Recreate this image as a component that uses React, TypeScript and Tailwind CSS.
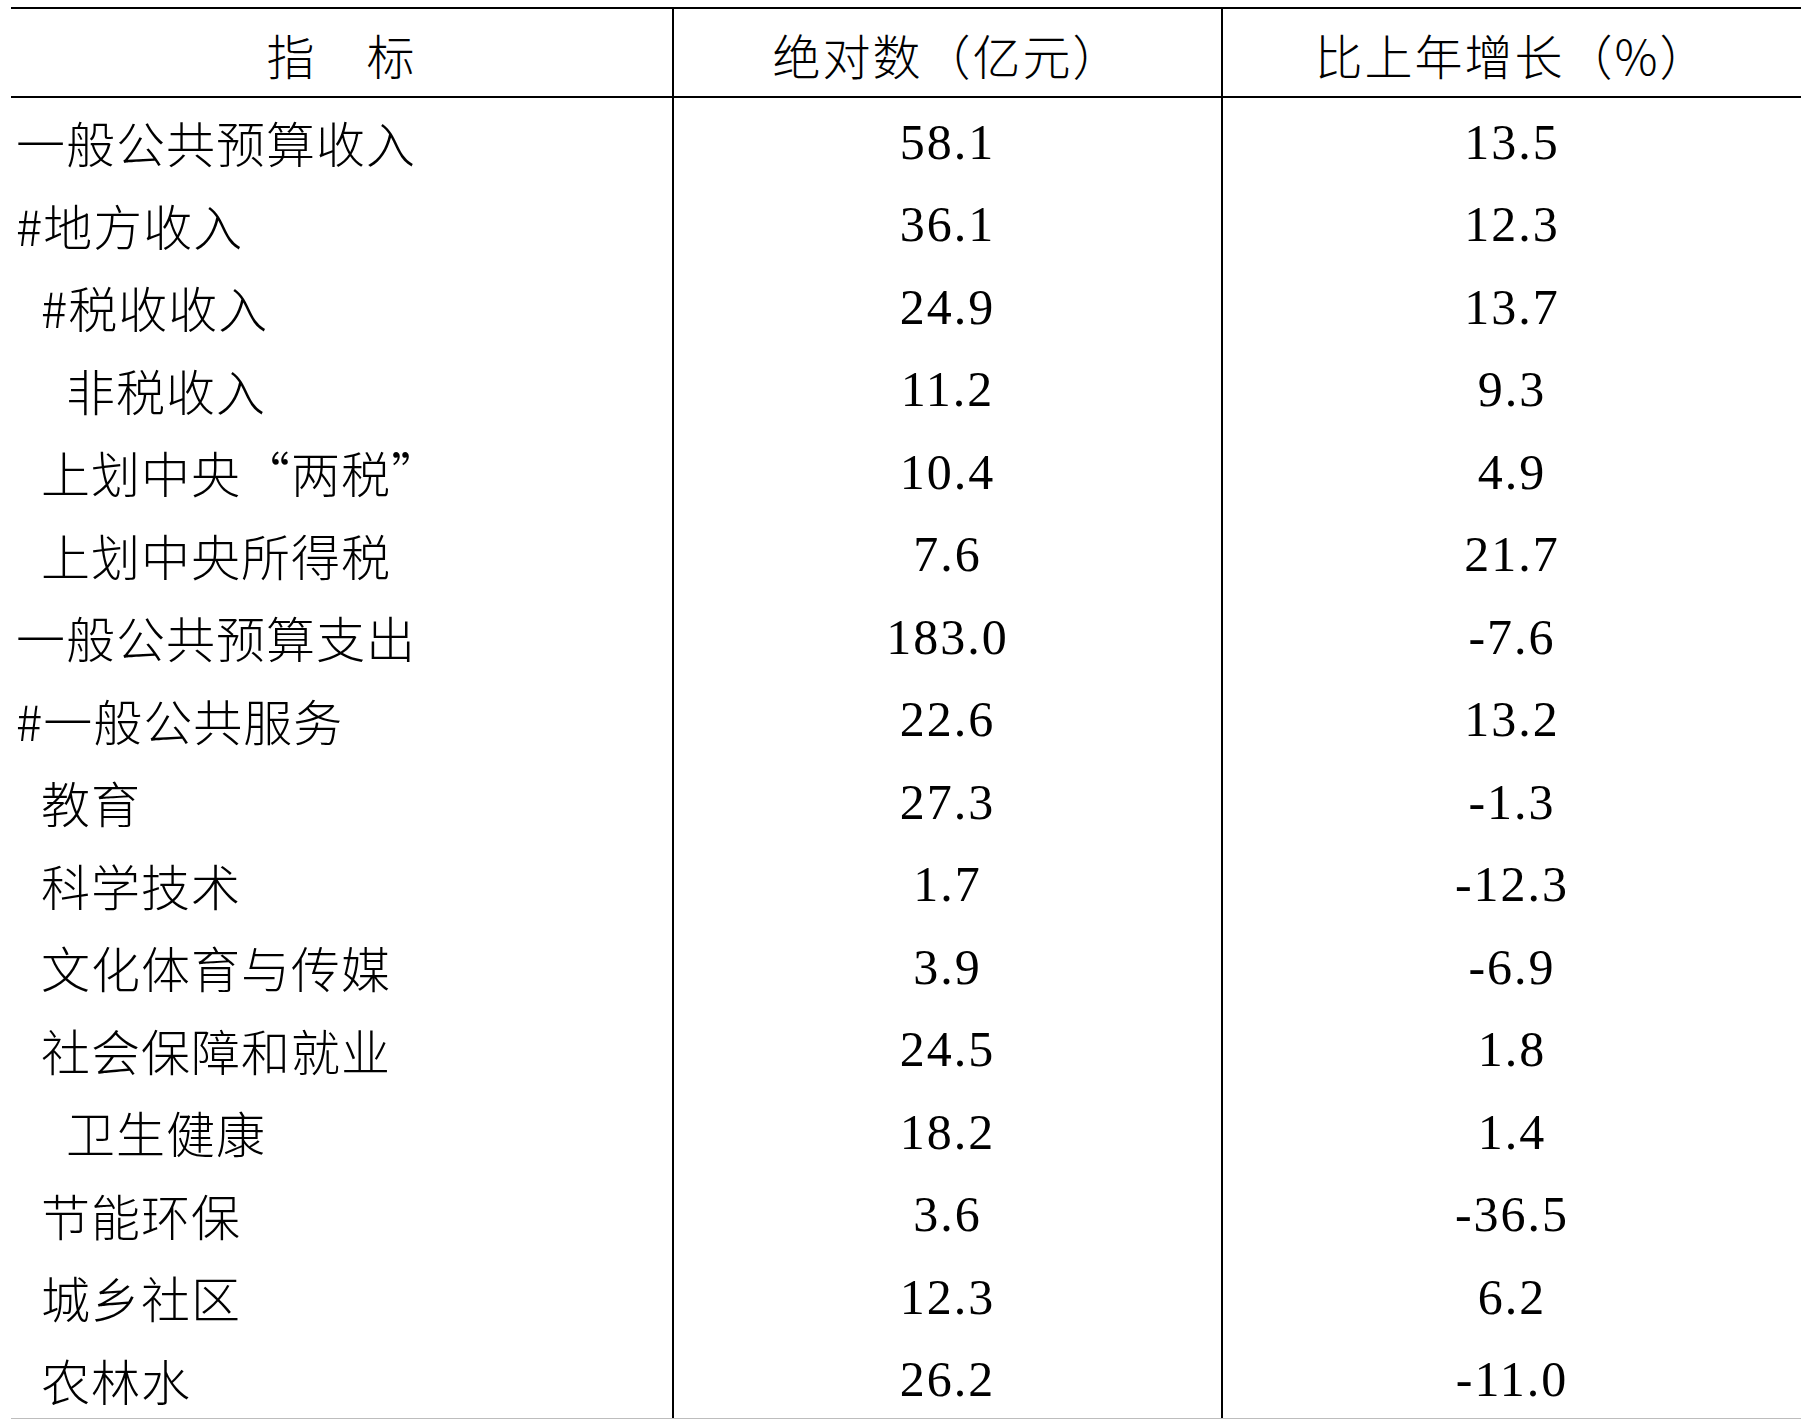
const rows: { name: string; indent: number; abs: string; growth: string }[] = [
  { name: '一般公共预算收入', indent: 0, abs: '58.1', growth: '13.5' },
  { name: '#地方收入', indent: 0, abs: '36.1', growth: '12.3' },
  { name: '#税收收入', indent: 1, abs: '24.9', growth: '13.7' },
  { name: '非税收入', indent: 2, abs: '11.2', growth: '9.3' },
  { name: '上划中央“两税”', indent: 1, abs: '10.4', growth: '4.9' },
  { name: '上划中央所得税', indent: 1, abs: '7.6', growth: '21.7' },
  { name: '一般公共预算支出', indent: 0, abs: '183.0', growth: '-7.6' },
  { name: '#一般公共服务', indent: 0, abs: '22.6', growth: '13.2' },
  { name: '教育', indent: 1, abs: '27.3', growth: '-1.3' },
  { name: '科学技术', indent: 1, abs: '1.7', growth: '-12.3' },
  { name: '文化体育与传媒', indent: 1, abs: '3.9', growth: '-6.9' },
  { name: '社会保障和就业', indent: 1, abs: '24.5', growth: '1.8' },
  { name: '卫生健康', indent: 2, abs: '18.2', growth: '1.4' },
  { name: '节能环保', indent: 1, abs: '3.6', growth: '-36.5' },
  { name: '城乡社区', indent: 1, abs: '12.3', growth: '6.2' },
  { name: '农林水', indent: 1, abs: '26.2', growth: '-11.0' },
];

const indentClass = ['pl-[5px]', 'pl-[30px]', 'pl-[55px]'];

const cjk = "font-['Noto_Sans_CJK_SC',sans-serif] font-light";
const num = "font-['Liberation_Serif','Noto_Sans_CJK_SC',serif] tracking-[2px]";

export default function App() {
  return (
    <div className="w-[1801px] h-[1419px] bg-white pl-[11px] pt-[7px] text-black">
      <div className="border-t-2 border-black border-b border-b-[#bdbdbd]">
        {/* header */}
        <div className="grid grid-cols-[661px_549px_1fr] h-[89px] border-b-2 border-black">
          <div className={`flex items-center justify-center pt-[2px] text-[48px] tracking-[2px] leading-none ${cjk}`}>
            指　标
          </div>
          <div className={`flex items-center justify-center pt-[2px] border-l-2 border-black text-[48px] tracking-[2px] leading-none ${cjk}`}>
            绝对数（亿元）
          </div>
          <div className={`flex items-center justify-center pt-[2px] border-l-2 border-black text-[48px] tracking-[2px] leading-none ${cjk}`}>
            比上年增长（%）
          </div>
        </div>
        {/* body */}
        {rows.map((r) => (
          <div key={r.name} className="grid grid-cols-[661px_549px_1fr] h-[82.5px]">
            <div className={`flex items-center pt-[5px] text-[49px] tracking-[1px] leading-none ${cjk} ${indentClass[r.indent]}`}>
              {r.name}
            </div>
            <div className={`flex items-center justify-center pt-[5px] border-l-2 border-black text-[50px] leading-none ${num}`}>
              {r.abs}
            </div>
            <div className={`flex items-center justify-center pt-[5px] border-l-2 border-black text-[50px] leading-none ${num}`}>
              {r.growth}
            </div>
          </div>
        ))}
      </div>
    </div>
  );
}
